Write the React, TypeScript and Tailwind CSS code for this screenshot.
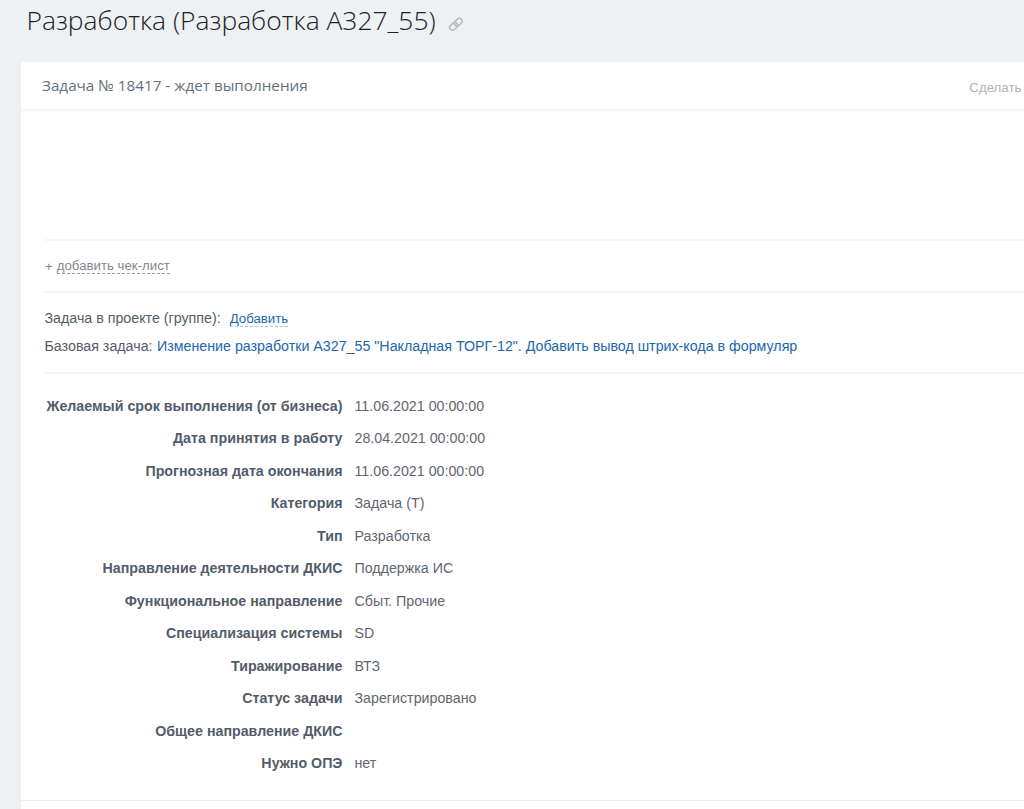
import { ReactNode } from "react";

const fields = [
  { label: "Желаемый срок выполнения (от бизнеса)", value: "11.06.2021 00:00:00" },
  { label: "Дата принятия в работу", value: "28.04.2021 00:00:00" },
  { label: "Прогнозная дата окончания", value: "11.06.2021 00:00:00" },
  { label: "Категория", value: "Задача (Т)" },
  { label: "Тип", value: "Разработка" },
  { label: "Направление деятельности ДКИС", value: "Поддержка ИС" },
  { label: "Функциональное направление", value: "Сбыт. Прочие" },
  { label: "Специализация системы", value: "SD" },
  { label: "Тиражирование", value: "ВТЗ" },
  { label: "Статус задачи", value: "Зарегистрировано" },
  { label: "Общее направление ДКИС", value: "" },
  { label: "Нужно ОПЭ", value: "нет" },
];

function LinkIcon() {
  return (
    <svg className="w-4 h-4 shrink-0" viewBox="0 0 16 16" fill="none" stroke="#b9bbbd" strokeWidth="1.6">
      <rect x="-4.3" y="-2.8" width="8.6" height="5.6" rx="2.8" transform="translate(10.2 6.2) rotate(-42)" />
      <rect x="-4.3" y="-2.8" width="8.6" height="5.6" rx="2.8" transform="translate(5.6 10.4) rotate(-42)" />
    </svg>
  );
}

function Section({ className, children }: { className: string; children?: ReactNode }) {
  return <section className={`ml-[23px] border-[#f5f6f7] ${className}`}>{children}</section>;
}

export default function App() {
  return (
    <div className="h-[809px] overflow-hidden bg-[#edf1f4] pl-[21px] font-['Liberation_Sans',Arial,sans-serif] text-[#535c69]">
      {/* Page title */}
      <header className="h-[62px] flex items-start gap-3 pl-[5.5px]">
        <h1 className="font-['Open_Sans',sans-serif] font-light text-[26.4px] leading-[41px] text-[#222] whitespace-nowrap">
          Разработка (Разработка А327_55)
        </h1>
        <div className="pt-4">
          <LinkIcon />
        </div>
      </header>

      <main className="h-[747px] bg-white">
        {/* Task status bar */}
        <div className="h-[49px] flex items-start justify-between border-b-2 border-[#f4f6f7] pl-[21px] pr-[2.5px]">
          <span className="font-['Open_Sans',sans-serif] text-[15.25px] leading-[46px] text-[#65707a]">
            Задача № 18417 - ждет выполнения
          </span>
          <span className="text-[13.3px] leading-[51px] text-[#b3b3b3]">Сделать</span>
        </div>

        <Section className="h-[130px] border-b-2" />

        <Section className="h-[52px] border-b-2 flex items-center pl-px text-[13.25px] leading-[15px] text-[#80868e]">
          <span className="mr-1">+</span>
          <a href="#" className="border-b border-dashed border-[#9a9fa5]">добавить чек-лист</a>
        </Section>

        <Section className="h-[81px] border-b-2 pt-[12px] pl-[0.5px] text-[14.24px] leading-[27.5px] whitespace-nowrap">
          <div className="flex items-center">
            <span className="mr-[9px]">Задача в проекте (группе):</span>
            <a href="#" className="border-b border-dashed border-[#a9c5e8] pt-px text-[13.25px] leading-[15px] text-[#2067b0]">
              Добавить
            </a>
          </div>
          <div>
            Базовая задача:{" "}
            <a href="#" className="ml-[0.5px] text-[#2067b0]">
              Изменение разработки А327_55 "Накладная ТОРГ-12". Добавить вывод штрих-кода в формуляр
            </a>
          </div>
        </Section>

        {/* Custom fields */}
        <dl className="pt-[15.5px] h-[427px] border-b border-[#eceeef] text-[14.24px] leading-[32.5px] whitespace-nowrap">
          {fields.map((f) => (
            <div key={f.label} className="flex h-[32.5px] gap-3">
              <dt className="w-[321.5px] shrink-0 text-right font-bold">{f.label}</dt>
              <dd className="text-[#5f6670]">{f.value}</dd>
            </div>
          ))}
        </dl>
      </main>
    </div>
  );
}
